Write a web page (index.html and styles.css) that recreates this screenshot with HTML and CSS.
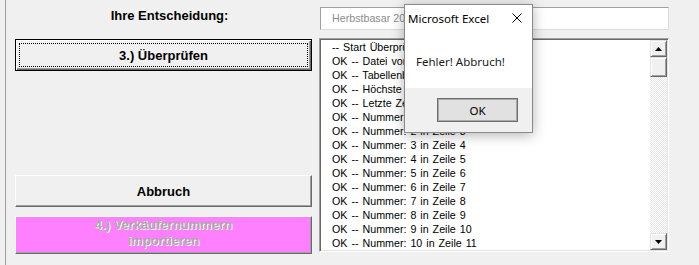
FILE: index.html
```html
<!DOCTYPE html>
<html lang="de">
<head>
<meta charset="utf-8">
<title>Herbstbasar</title>
<link rel="stylesheet" href="styles.css">
</head>
<body>
<div class="app">
  <div class="left">
    <div class="heading">Ihre Entscheidung:</div>
    <button class="btn btn-focus" type="button">3.) Überprüfen</button>
    <button class="btn btn-cancel" type="button">Abbruch</button>
    <button class="btn btn-import" type="button" disabled>4.) Verkäufernummern<br>importieren</button>
  </div>
  <div class="right">
    <div class="textbox">Herbstbasar 2019</div>
    <div class="listbox">
      <div class="items">
        <div class="item">-- Start Überprüfung</div>
        <div class="item">OK -- Datei vorhanden</div>
        <div class="item">OK -- Tabellenblatt ok</div>
        <div class="item">OK -- Höchste Nr: 10</div>
        <div class="item">OK -- Letzte Zeile: 11</div>
        <div class="item">OK -- Nummer: 1 in Zeile 2</div>
        <div class="item">OK -- Nummer: 2 in Zeile 3</div>
        <div class="item">OK -- Nummer: 3 in Zeile 4</div>
        <div class="item">OK -- Nummer: 4 in Zeile 5</div>
        <div class="item">OK -- Nummer: 5 in Zeile 6</div>
        <div class="item">OK -- Nummer: 6 in Zeile 7</div>
        <div class="item">OK -- Nummer: 7 in Zeile 8</div>
        <div class="item">OK -- Nummer: 8 in Zeile 9</div>
        <div class="item">OK -- Nummer: 9 in Zeile 10</div>
        <div class="item">OK -- Nummer: 10 in Zeile 11</div>
      </div>
      <div class="scrollbar">
        <div class="sb-btn"><svg width="7" height="4" viewBox="0 0 7 4"><path d="M0 4 L3.5 0 L7 4 Z" fill="#000"/></svg></div>
        <div class="sb-thumb"></div>
        <div class="sb-track"></div>
        <div class="sb-btn"><svg width="7" height="4" viewBox="0 0 7 4"><path d="M0 0 L7 0 L3.5 4 Z" fill="#000"/></svg></div>
      </div>
    </div>
  </div>

  <div class="dialog">
    <div class="dlg-title">
      <span class="dlg-caption">Microsoft Excel</span>
      <svg class="dlg-close" width="10" height="10" viewBox="0 0 10 10"><path d="M0.5 0.5 L9.5 9.5 M9.5 0.5 L0.5 9.5" stroke="#000" stroke-width="1" fill="none"/></svg>
    </div>
    <div class="dlg-body">Fehler! Abbruch!</div>
    <div class="dlg-footer">
      <button class="dlg-ok" type="button">OK</button>
    </div>
  </div>
</div>
</body>
</html>
```

FILE: styles.css
```css
html, body {
  margin: 0;
  padding: 0;
  background: #f0f0f0;
}

.app {
  position: relative;
  display: flex;
  width: 699px;
  height: 265px;
  padding-left: 5px;
  box-sizing: border-box;
  font-family: "Liberation Sans", Arial, sans-serif;
}

.left {
  width: 297px;
  flex: none;
  border-left: 1px solid #a0a0a0;
  padding-left: 9px;
  display: flex;
  flex-direction: column;
}

.heading {
  font-weight: bold;
  font-size: 13px;
  line-height: 16px;
  padding-top: 8px;
  padding-left: 12px;
  text-align: center;
  color: #000;
}

.btn {
  display: block;
  position: relative;
  width: 297px;
  height: 32px;
  margin: 0;
  padding: 0;
  background: #f0f0f0;
  color: #000;
  font: bold 13px "Liberation Sans", Arial, sans-serif;
  border: 1px solid;
  border-color: #fff #696969 #696969 #fff;
  box-shadow: inset -1px -1px #a0a0a0;
  box-sizing: border-box;
}

.btn-focus {
  margin-top: 15px;
  border-color: #000;
  box-shadow: inset 1px 1px #fff, inset -1px -1px #696969, inset -2px -2px #a0a0a0;
}

.btn-focus::after {
  content: "";
  position: absolute;
  left: 3px;
  top: 3px;
  right: 3px;
  bottom: 3px;
  border: 1px dotted #000;
}

.btn-cancel {
  margin-top: 104px;
}

.btn-import {
  margin-top: 9px;
  height: 38px;
  background: #ff80ff;
  color: #a8a8a8;
  text-shadow: 1px 1px 0 #fff;
  line-height: 16px;
  padding-bottom: 4px;
}

.right {
  margin-left: 7px;
  width: 350px;
  flex: none;
  display: flex;
  flex-direction: column;
}

.textbox {
  margin-top: 7px;
  height: 23px;
  box-sizing: border-box;
  background: #fff;
  border: 1px solid #dcdcdc;
  border-top-color: #a0a0a0;
  border-left-color: #a0a0a0;
  margin-left: 1px;
  font-size: 10.7px;
  line-height: 21px;
  padding-left: 11px;
  color: #8c8c8c;
}

.listbox {
  margin-top: 8px;
  height: 214px;
  box-sizing: border-box;
  background: #fff;
  border: 1px solid;
  border-color: #a0a0a0 #fff #fff #a0a0a0;
  box-shadow: inset 1px 1px #696969, inset -1px -1px #e3e3e3;
  padding: 1px;
  display: flex;
}

.items {
  flex: 1;
  padding-left: 11px;
  font-size: 10.7px;
  word-spacing: 1px;
  line-height: 14px;
  color: #000;
  overflow: hidden;
  white-space: nowrap;
}

.scrollbar {
  width: 17px;
  flex: none;
  display: flex;
  flex-direction: column;
}

.sb-btn, .sb-thumb {
  box-sizing: border-box;
  background: #f0f0f0;
  border: 1px solid;
  border-color: #e3e3e3 #696969 #696969 #e3e3e3;
  box-shadow: inset 1px 1px #fff, inset -1px -1px #a0a0a0;
}

.sb-btn {
  height: 17px;
  display: flex;
  align-items: center;
  justify-content: center;
}

.sb-btn svg {
  display: block;
}

.sb-thumb {
  height: 20px;
}

.sb-track {
  flex: 1;
  background: repeating-conic-gradient(#ffffff 0 25%, #e6e6e6 0 50%) 0 0 / 2px 2px;
}

.dialog {
  position: absolute;
  left: 404px;
  top: 4px;
  width: 129px;
  height: 129px;
  box-sizing: border-box;
  background: #fff;
  border: 1px solid #8a8a8a;
  box-shadow: 0 2px 12px rgba(0, 0, 0, 0.3);
  display: flex;
  flex-direction: column;
  font-family: "Noto Sans", "Open Sans", sans-serif;
  color: #000;
}

.dlg-title {
  height: 26px;
  display: flex;
  align-items: center;
  justify-content: space-between;
  padding: 0 10px 0 3px;
  font-size: 11.5px;
}

.dlg-close {
  display: block;
}

.dlg-body {
  height: 57px;
  padding-left: 11px;
  font-size: 11.5px;
  line-height: 16px;
  padding-top: 23px;
  box-sizing: border-box;
  color: #1a1a1a;
}

.dlg-footer {
  flex: 1;
  background: #f0f0f0;
  display: flex;
  justify-content: flex-end;
  padding-top: 10px;
  padding-right: 14px;
}

.dlg-ok {
  width: 81px;
  height: 24px;
  margin: 0;
  padding: 0;
  background: #e1e1e1;
  border: 1px solid #6e6e6e;
  box-shadow: inset 0 0 0 1px #a9a9a9;
  font-family: "Noto Sans", "Open Sans", sans-serif;
  font-size: 11.5px;
  color: #000;
}
```
